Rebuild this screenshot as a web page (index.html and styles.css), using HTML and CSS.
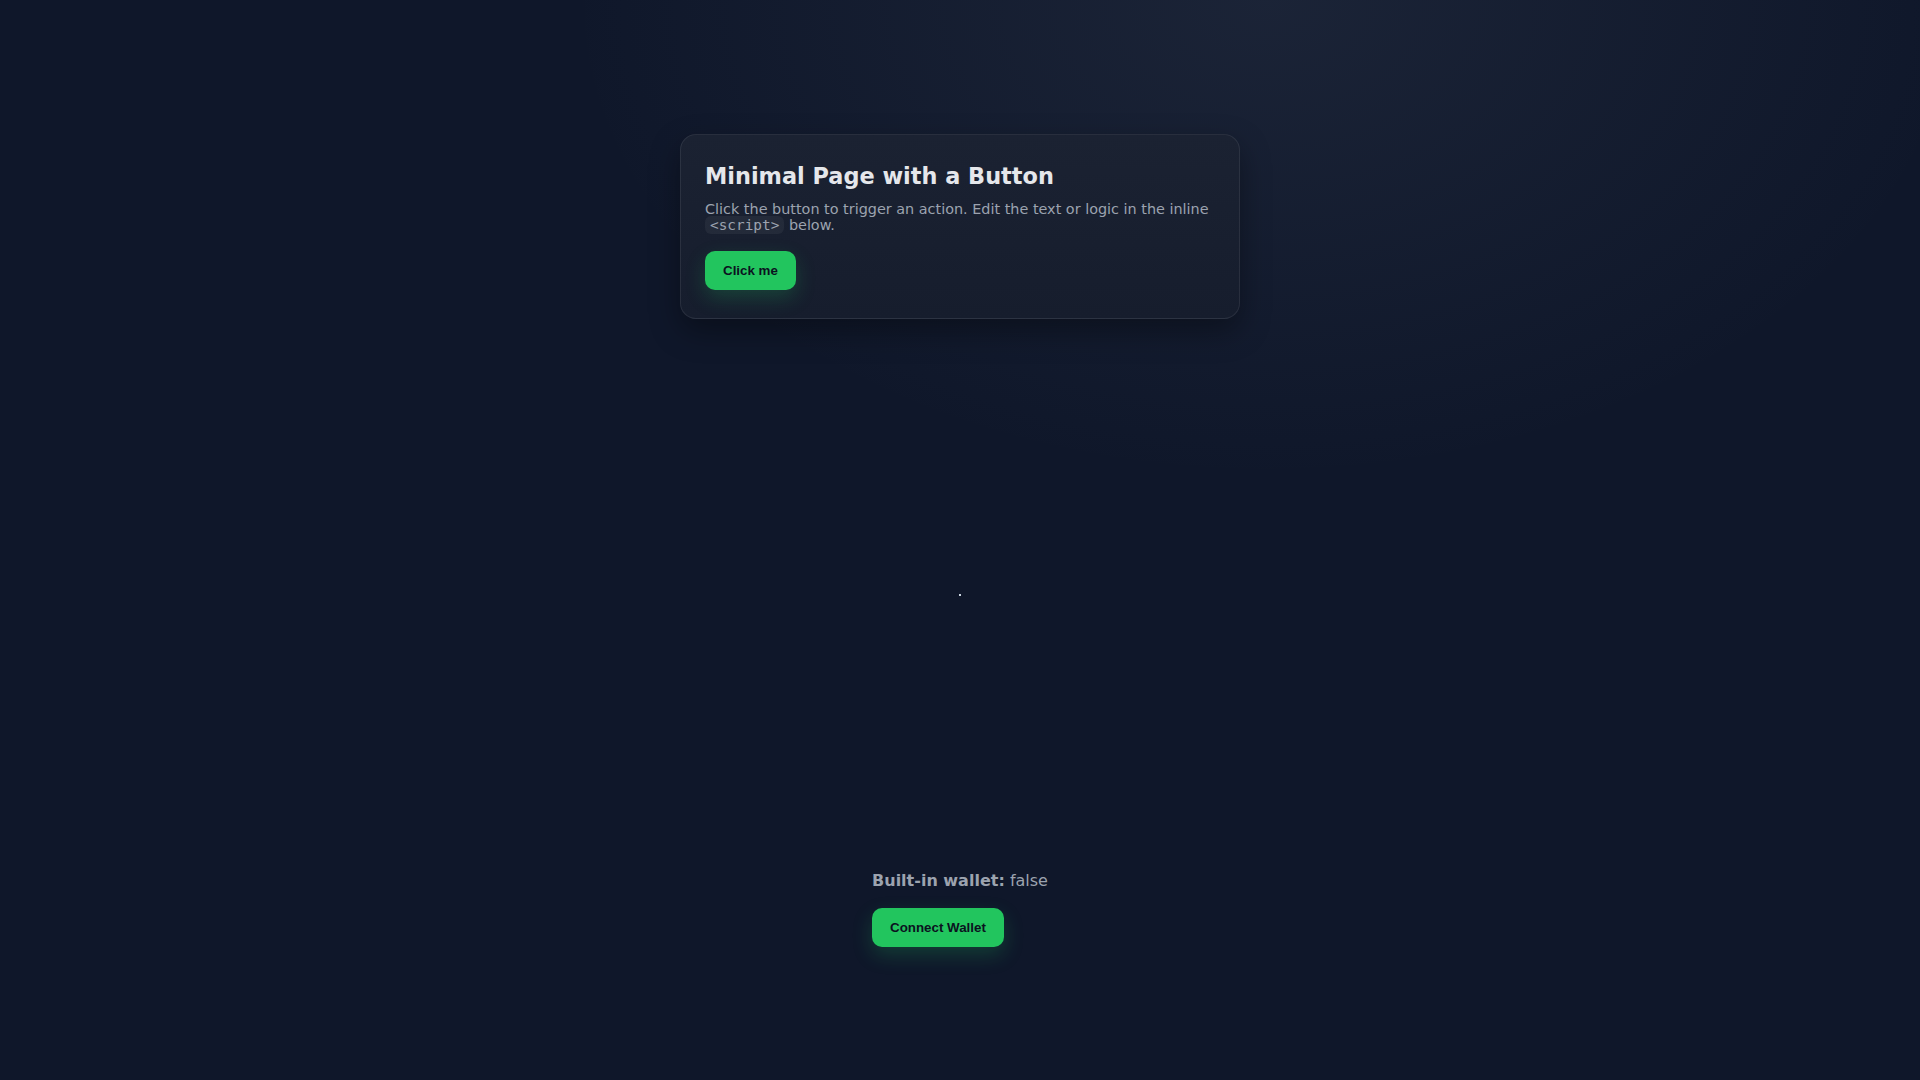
FILE: index.html
```html
<!DOCTYPE html>
<html lang="en">
<head>
    <meta charset="UTF-8">
    <title>Minimal Page with a Button</title>
    <link rel="stylesheet" href="styles.css">
</head>
<body>
    <main class="page">
        <div class="card">
            <h1>Minimal Page with a Button</h1>
            <p>Click the button to trigger an action. Edit the text or logic in the inline <code>&lt;script&gt;</code> below.</p>
            <button class="btn" id="clickBtn">Click me</button>
        </div>

        <div class="middle">
            <div class="dot"></div>
        </div>

        <div class="wallet">
            <div class="wallet-status"><strong>Built-in wallet:</strong> <span id="walletFlag">false</span></div>
            <button class="btn" id="connectBtn">Connect Wallet</button>
        </div>
    </main>

    <script>
        document.getElementById('clickBtn').onclick = () => {
            document.getElementById('clickBtn').textContent = 'Clicked!';
        };
    </script>
</body>
</html>
```

FILE: styles.css
```css
html, body {
    margin: 0;
    padding: 0;
}

body {
    min-height: 100vh;
    font-family: "DejaVu Sans", sans-serif;
    color: #e5e7eb;
    background:
        radial-gradient(ellipse 700px 480px at 66% 0%, rgba(148, 163, 184, 0.09), rgba(148, 163, 184, 0) 100%),
        #0f172a;
}

.page {
    min-height: 100vh;
    display: flex;
    flex-direction: column;
    align-items: center;
    padding-top: 134px;
    box-sizing: border-box;
}

.card {
    width: 560px;
    box-sizing: border-box;
    padding: 28px 24px;
    border: 1px solid rgba(255, 255, 255, 0.08);
    border-radius: 16px;
    background: linear-gradient(180deg, #1b2232, #161d2d);
    box-shadow: 0 12px 30px rgba(0, 0, 0, 0.35);
}

.card h1 {
    margin: 0 0 11.5px;
    font-size: 22.4px;
    line-height: 26px;
    font-weight: bold;
    color: #e5e7eb;
}

.card p {
    margin: 0 0 17px;
    font-size: 14.4px;
    line-height: 16.5px;
    color: #9ca3af;
}

.card code {
    font-family: "DejaVu Sans Mono", monospace;
    font-size: 1em;
    padding: 1px 5px;
    border-radius: 6px;
    background: rgba(255, 255, 255, 0.05);
}

.btn {
    padding: 12px 18px;
    font-family: "Liberation Sans", Arial, sans-serif;
    font-size: 13.333px;
    font-weight: bold;
    color: #0b1220;
    background: #22c55e;
    border: none;
    border-radius: 10px;
    cursor: pointer;
    box-shadow: 0 8px 20px rgba(34, 197, 94, 0.22);
}

.middle {
    height: 552px;
    display: flex;
    align-items: center;
    justify-content: center;
}

.dot {
    width: 2px;
    height: 2px;
    background: #cbd5e1;
}

.wallet {
    display: flex;
    flex-direction: column;
    align-items: flex-start;
    gap: 18px;
}

.wallet-status {
    font-size: 16px;
    color: #9ca3af;
}
```
